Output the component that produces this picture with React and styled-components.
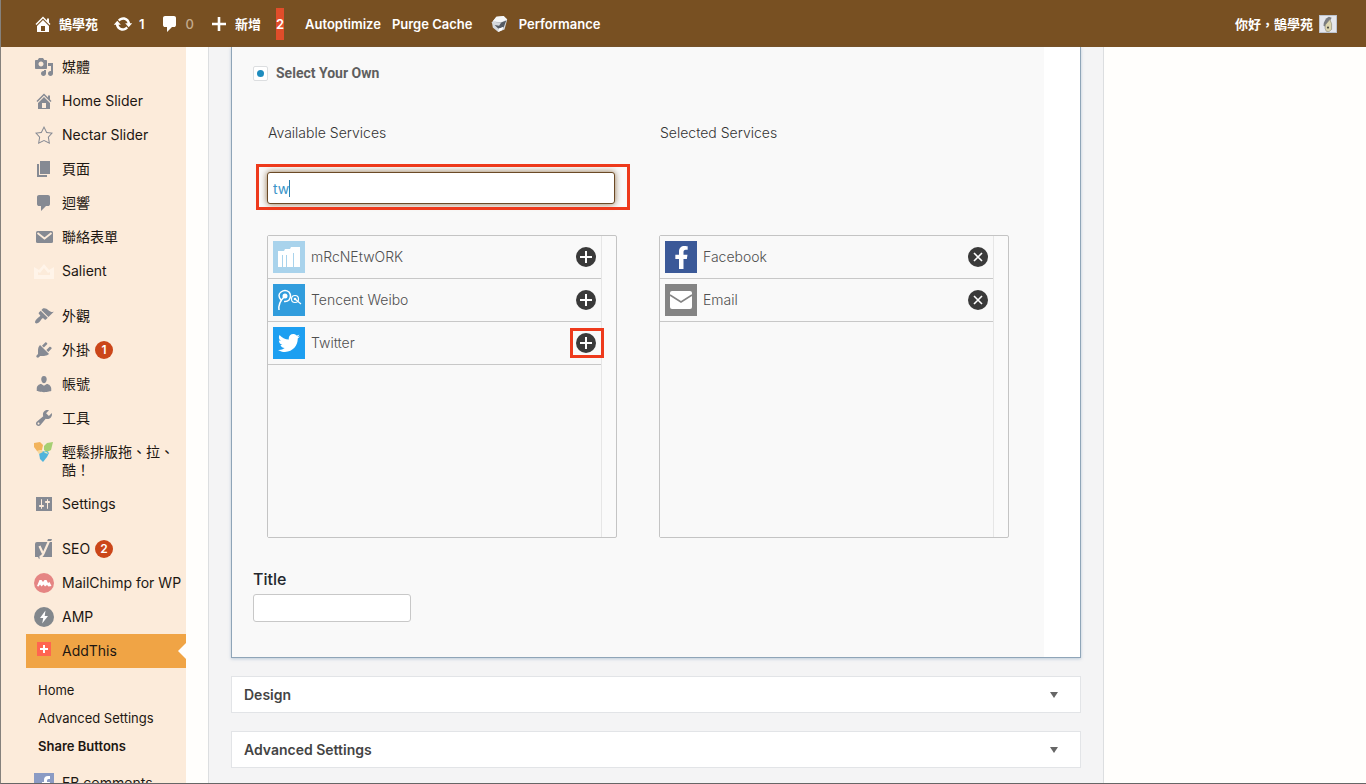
import React, { useState } from 'react';
import styled, { createGlobalStyle, css } from 'styled-components';
import { FaFacebookF, FaTwitter } from 'react-icons/fa';

const GlobalStyle = createGlobalStyle`
  *, *::before, *::after {
    box-sizing: border-box;
  }

  body {
    margin: 0;
    background: #fffefc;
    color: #444;
    font-family: Inter, 'Noto Sans CJK TC', sans-serif;
    font-size: 14px;
    line-height: 18px;
  }

  button, input {
    font: inherit;
  }

  a {
    color: inherit;
    text-decoration: none;
  }
`;

const Page = styled.div`
  display: flex;
  flex-direction: column;
  height: 100vh;
  overflow: hidden;
  border-left: 1px solid #85817c;
  border-bottom: 1px solid #666;
`;

/* Admin bar */

const AdminBar = styled.header`
  display: flex;
  flex: none;
  align-items: center;
  gap: 15px;
  height: 47px;
  padding: 0 29px 0 32px;
  background: #785022;
  color: #fff;
  font-size: 13px;
  font-weight: 600;
`;

const BarLink = styled.a`
  display: flex;
  align-items: center;
  gap: 6px;
  margin-left: ${(p) => p.$indent || 0}px;
  white-space: nowrap;
`;

const Muted = styled.span`
  color: #c4ab8d;
  font-weight: 500;
`;

const NoticeCount = styled.a`
  height: 32px;
  background: #e14d2a;
  line-height: 32px;
`;

const Account = styled(BarLink)`
  margin-left: auto;
`;

/* Sidebar */

const Main = styled.div`
  display: flex;
  flex: 1;
  min-height: 0;
`;

const Sidebar = styled.nav`
  flex: none;
  width: 185px;
  padding: 3px 0 0 25px;
  background: #fcebda;
  color: #1d1712;
`;

const Menu = styled.ul`
  margin: 0 0 11px;
  padding: 0;
  list-style: none;
`;

const MenuLink = styled.a`
  position: relative;
  display: flex;
  gap: 8px;
  padding: 8px 0 8px 8px;

  ${(p) =>
    p.$current &&
    css`
      background: #f0a445;

      &::after {
        content: '';
        position: absolute;
        top: 9px;
        right: 0;
        border: 8px solid transparent;
        border-right-color: #fffefc;
        border-left: 0;
      }
    `}
`;

const MenuIcon = styled.span`
  flex: none;
  width: 20px;
  height: 18px;
  color: #868a93;

  svg {
    display: block;
    margin: -1px 0;
  }
`;

const MenuText = styled.span`
  white-space: ${(p) => (p.$wrap ? 'normal' : 'nowrap')};
`;

const Badge = styled.span`
  display: inline-block;
  width: 18px;
  margin-left: 5px;
  border-radius: 9px;
  background: #cb4619;
  color: #fff;
  font-size: 12px;
  font-weight: 600;
  text-align: center;
  vertical-align: top;
`;

const SubMenu = styled.ul`
  margin: 0;
  padding: 8px 0 6px 12px;
  list-style: none;
  font-size: 13px;
  line-height: 28px;
`;

const SubLink = styled.a`
  display: block;
  font-weight: ${(p) => (p.$current ? 600 : 400)};
`;

/* Content */

const Content = styled.main`
  display: flex;
  flex: 1;
  min-width: 0;
  padding-left: 22px;
`;

const Panel = styled.div`
  display: flex;
  flex: 1;
  flex-direction: column;
  gap: 18px;
  max-width: 896px;
  padding: 0 22px;
  border: solid #dcdee0;
  border-width: 0 1px;
  background: #f4f4f5;
`;

const OpenCard = styled.section`
  padding-right: 36px;
  border: solid #8fa5b8;
  border-width: 0 1px 1px;
  background: #fff;
  box-shadow: 0 1px 3px rgba(90, 130, 170, 0.35);
`;

const CardBody = styled.div`
  padding: 14px 21px 35px;
  background: #f9f9f9;
`;

const RadioLabel = styled.label`
  display: flex;
  align-items: center;
  gap: 8px;
  height: 24px;
  color: #5f5f5f;
  font-family: Roboto, sans-serif;
  font-weight: 700;
`;

const Radio = styled.input`
  appearance: none;
  display: grid;
  place-items: center;
  width: 15px;
  height: 15px;
  margin: 0;
  border: 1px solid #dcdee0;
  border-radius: 2px;
  background: #fff;

  &:checked::before {
    content: '';
    width: 7px;
    height: 7px;
    border-radius: 50%;
    background: #1e8cbe;
  }
`;

const Columns = styled.div`
  display: grid;
  grid-template-columns: 1fr 1fr;
  gap: 42px;
  margin: 38px 14px 31px;
`;

const ColumnTitle = styled.h3`
  margin: 0 0 29px;
  padding-left: 1px;
  color: #333;
  font-size: 14px;
  font-weight: 300;
  line-height: 20px;
`;

const SearchRow = styled.div`
  position: relative;
  height: 32px;
  margin-bottom: 31px;
`;

const highlight = css`
  content: '';
  position: absolute;
  border: 3px solid #ee3a1c;
  pointer-events: none;
`;

const SearchBox = styled(SearchRow)`
  margin-right: 2px;

  &::after {
    ${highlight}
    inset: -8px -15px -6px -11px;
  }
`;

const SearchInput = styled.input`
  width: 100%;
  height: 32px;
  padding: 0 5px;
  border: 1px solid #6b4a26;
  border-radius: 3px;
  outline: none;
  background: #fff;
  box-shadow: 0 0 6px rgba(120, 80, 34, 0.8);
  color: #3a94c8;
  caret-color: transparent;
`;

const Caret = styled.span`
  position: absolute;
  top: 8px;
  left: 22px;
  width: 1px;
  height: 17px;
  background: #2a7fae;
`;

const ServiceBox = styled.div`
  height: 303px;
  padding-right: 14px;
  border: 1px solid #c4c4c4;
  border-radius: 2px;
  background: #fafafa;
`;

const ServiceList = styled.ul`
  height: 100%;
  margin: 0;
  padding: 0;
  border-right: 1px solid #e6e6e6;
  background: #f9f9f9;
  list-style: none;
`;

const ServiceRow = styled.li`
  display: flex;
  align-items: center;
  gap: 6px;
  height: 43px;
  padding: 0 5px;
  border-bottom: 1px solid #c8c8c8;
  color: #505050;
  font-weight: 300;
`;

const ServiceName = styled.span`
  flex: 1;
`;

const Tile = styled.span`
  display: grid;
  place-items: center;
  width: 32px;
  height: 32px;
  background: ${(p) => p.$color};
  color: #fff;
`;

const RoundButton = styled.button`
  position: relative;
  width: 20px;
  height: 20px;
  padding: 0;
  border: 0;
  border-radius: 50%;
  background: #3a3a3a;
  color: #fff;
  cursor: pointer;

  svg {
    display: block;
  }

  ${(p) =>
    p.$marked &&
    css`
      &::after {
        ${highlight}
        inset: -5px -8px -5px -6px;
      }
    `}
`;

const TitleField = styled.div`
  display: flex;
  flex-direction: column;
  align-items: flex-start;
  gap: 5px;
`;

const TitleLabel = styled.label`
  color: #23282d;
  font-size: 16px;
  font-weight: 500;
  line-height: 20px;
`;

const TitleInput = styled.input`
  width: 158px;
  height: 28px;
  padding: 0 6px;
  border: 1px solid #c8c8c8;
  border-radius: 3px;
  background: #fff;
`;

const ClosedCard = styled.button`
  display: flex;
  flex: none;
  align-items: center;
  justify-content: space-between;
  height: 37px;
  padding: 0 22px 0 12px;
  border: 1px solid #e2e4e7;
  background: #fff;
  color: #444;
  font-weight: 600;
  cursor: pointer;
`;

const Arrow = styled.span`
  border: 4px solid transparent;
  border-top: 6px solid #666;
  border-bottom: 0;
`;

/* Icons */

const paths = {
  media:
    'M13 11V4c0-.55-.45-1-1-1h-1.67L9 1H5L3.67 3H2c-.55 0-1 .45-1 1v7c0 .55.45 1 1 1h10c.55 0 1-.45 1-1zM7 4.5c1.38 0 2.5 1.12 2.5 2.5S8.38 9.5 7 9.5 4.5 8.38 4.5 7 5.62 4.5 7 4.5zM14 6h5v10.5c0 1.38-1.12 2.5-2.5 2.5S14 17.88 14 16.5s1.12-2.5 2.5-2.5c.17 0 .34.02.5.05V9h-3V6zm-4 8.05V13h2v3.5c0 1.38-1.12 2.5-2.5 2.5S7 17.88 7 16.5 8.12 14 9.5 14c.17 0 .34.02.5.05z',
  home: 'M16 8.5l1.53 1.53-1.06 1.06L10 4.6l-6.47 6.49-1.06-1.06L10 2.5l4 4v-2h2v4zm-6-2.46l6 5.99V18H4v-5.97zM12 17v-5H8v5h4z',
  star: 'M10 1L7 7l-6 .75 4.13 4.62L4 19l6-3 6 3-1.12-6.63L19 7.75 13 7zm0 2.24l2.34 4.69 4.65.58-3.18 3.56.87 5.15L10 14.88l-4.68 2.34.87-5.15-3.18-3.56 4.65-.58z',
  page: 'M6 15V2h10v13H6zm-1 1h8v2H3V5h2v11z',
  comment:
    'M5 2h9q.82 0 1.41.59T16 4v7q0 .82-.59 1.41T14 13h-2l-5 5v-5H5q-.82 0-1.41-.59T3 11V4q0-.82.59-1.41T5 2z',
  brush:
    'M14.48 11.06L7.41 3.99l1.5-1.5c.5-.56 2.3-.47 3.51.32 1.21.8 1.43 1.28 2.91 2.1 1.18.64 2.45 1.26 4.45.85zm-.71.71L6.7 4.7 4.93 6.47c-.39.39-.39 1.02 0 1.41l1.06 1.06c.39.39.39 1.03 0 1.42-.6.6-1.43 1.11-2.21 1.69-.35.26-.7.53-1.01.84C1.43 14.23.4 16.08 1.4 17.07c.99 1 2.84-.03 4.18-1.36.31-.31.58-.66.85-1.02.57-.78 1.08-1.61 1.69-2.21.39-.39 1.02-.39 1.41 0l1.06 1.06c.39.39 1.02.39 1.41 0z',
  plug: 'M13.11 4.36L9.87 7.6 8 5.73l3.24-3.24c.35-.34 1.05-.2 1.56.32.52.51.66 1.21.31 1.55zm-8 1.77l.91-1.12 9.01 9.01-1.19.84c-.71.71-2.63 1.16-3.82 1.16H6.14L4.9 17.26c-.59.59-1.54.59-2.12 0-.59-.58-.59-1.53 0-2.12l1.24-1.24v-3.88c0-1.13.4-3.19 1.09-3.89zm7.26 3.97l3.24-3.24c.34-.35 1.04-.21 1.55.31.52.51.66 1.21.31 1.55l-3.24 3.25z',
  user: 'M10 9.25c-2.27 0-2.73-3.44-2.73-3.44C7 4.02 7.82 2 9.97 2c2.16 0 2.98 2.02 2.71 3.81 0 0-.41 3.44-2.68 3.44zm0 2.57L12.72 10c2.39 0 4.52 2.33 4.52 4.53v2.49s-3.65 1.13-7.24 1.13c-3.65 0-7.24-1.13-7.24-1.13v-2.49c0-2.25 1.94-4.48 4.47-4.48z',
  wrench:
    'M16.68 9.77c-1.34 1.34-3.3 1.67-4.95.99l-5.41 6.52c-.99.99-2.59.99-3.58 0s-.99-2.59 0-3.57l6.52-5.42c-.68-1.65-.35-3.61.99-4.95 1.28-1.28 3.12-1.62 4.72-1.06l-2.89 2.89 2.82 2.82 2.86-2.87c.53 1.58.18 3.39-1.08 4.65zM3.81 16.21c.4.39 1.04.39 1.43 0 .4-.4.4-1.04 0-1.43-.39-.4-1.03-.4-1.43 0-.39.39-.39 1.03 0 1.43z',
  sliders:
    'M18 17V3H2v14h16zM8 11h1c.55 0 1 .45 1 1s-.45 1-1 1H8v1.5c0 .28-.22.5-.5.5s-.5-.22-.5-.5V13H6c-.55 0-1-.45-1-1s.45-1 1-1h1V5.5c0-.28.22-.5.5-.5s.5.22.5.5V11zm5-2h-1c-.55 0-1-.45-1-1s.45-1 1-1h1V5.5c0-.28.22-.5.5-.5s.5.22.5.5V7h1c.55 0 1 .45 1 1s-.45 1-1 1h-1v5.5c0 .28-.22.5-.5.5s-.5-.22-.5-.5V9z',
  update:
    'M10.2 3.28c3.53 0 6.43 2.61 6.92 6h2.08l-3.5 4-3.5-4h2.32c-.45-1.97-2.21-3.45-4.32-3.45-1.45 0-2.73.71-3.54 1.78L4.95 5.66C6.23 4.2 8.11 3.28 10.2 3.28zm-.4 13.44c-3.52 0-6.43-2.61-6.92-6H.8l3.5-4c1.17 1.33 2.33 2.67 3.5 4H5.48c.45 1.97 2.21 3.45 4.32 3.45 1.45 0 2.73-.71 3.54-1.78l1.71 1.95c-1.28 1.46-3.15 2.38-5.25 2.38z',
  plus: 'M17 8.7v2.6h-5.7V17H8.7v-5.7H3V8.7h5.7V3h2.6v5.7z',
};

const Svg = ({ size = 20, children }) => (
  <svg width={size} height={size} viewBox="0 0 20 20" fill="currentColor" aria-hidden="true">
    {children}
  </svg>
);

const Icon = ({ name }) => (
  <Svg>
    <path fillRule="evenodd" d={paths[name]} />
  </Svg>
);

const MailIcon = () => (
  <Svg>
    <rect x="2" y="4" width="17" height="12" rx="1.5" />
    <path d="M3.5 6l7 5.5 7-5.5" fill="none" stroke="#fcebda" strokeWidth="1.8" />
  </Svg>
);

const CrownIcon = () => (
  <Svg>
    <path d="M0 6l5 3 5-6 5 6 5-3v12H0z" fill="#fff4e9" />
    <path d="M4 14V11l2 1 4-5 4 5 2-1v3z" fill="#fcebda" />
  </Svg>
);

const ComposerIcon = () => (
  <Svg>
    <path d="M0 1l6-1 3 3-1 5-5 1-3-4z" fill="#f2b35b" />
    <path d="M10 4l3-3 6-1-2 8-4 2-3-2z" fill="#a5cf72" />
    <path d="M5 11l3-2h5l2 2-2 4-4 5-3-3z" fill="#4fb4dc" />
    <path d="M3 9l5-1 1 2-4 2z" fill="#f6d79c" />
    <path d="M9 9l4 1 1 2-3-1z" fill="#d8ecc0" />
  </Svg>
);

const YoastIcon = () => (
  <Svg>
    <path d="M3 3h15v15H7L5 20l-1-2H1V5q0-2 2-2z" />
    <path d="M5.500 7l3.200 7M15.500 1L9.500 14.500q-1.500 3.500-4 3.500" fill="none" stroke="#fcebda" strokeWidth="2.200" />
    <path d="M14 0h4l-.8 2h-4z" />
  </Svg>
);

const ChimpIcon = () => (
  <Svg>
    <circle cx="10" cy="10" r="10" fill="#e58583" />
    <path d="M3 13l2.500-6h2L9 9l1.500-2h2l1.500 3 1.500-1 2 4-3 .5-1.500-1.500-2 1.500-1.500-2-2 2-1.500-2-1.500 2z" fill="#fff" />
  </Svg>
);

const AmpIcon = () => (
  <Svg>
    <circle cx="10" cy="10" r="10" fill="#82878c" />
    <path d="M11.500 3.500L6 11h3.200l-1 5.500L14 9h-3.300z" fill="#fff" />
  </Svg>
);

const AddThisIcon = () => (
  <Svg>
    <path d="M3 1h14v14H3z" fill="#ff6550" />
    <path d="M9 4h2v3h3v2h-3v3H9V9H6V7h3z" fill="#fff" />
  </Svg>
);

const FbIcon = () => (
  <Svg>
    <path d="M0 0h20v20H0z" fill="#8b9bc4" />
    <path d="M10 20v-8H8V9h2V7q0-4 4-4h2v3h-1.500Q13 6 13 7.500V9h3l-.5 3H13v8z" fill="#fff" />
  </Svg>
);

const CubeIcon = () => (
  <Svg size={18}>
    <path d="M6 2l8-1 4 4-3 11-7 3-6-5L1 8z" fill="#d5d8dc" />
    <path d="M6 2l8-1 4 4-7 3-9-1z" fill="#f6f7f8" />
    <path d="M2 7l8 2 7-3-3 8-6 1-4-4 5 1 2-3z" fill="#555b63" />
    <path d="M9 15l5-2-2 4-4 2z" fill="#fff" />
  </Svg>
);

const Avatar = () => (
  <Svg size={18}>
    <path d="M0 0h20v20H0z" fill="#b9c0cc" />
    <path d="M1 1h18v18H1z" fill="#e6e7ec" />
    <path d="M5 12q0-7 6-10l3 1-3 6-4 4z" fill="#7b7d80" />
    <path d="M7 11l5-6q3 4 2 11-3 4-6 2-2-3-1-7z" fill="#ddd5ae" stroke="#8d8a7c" strokeWidth=".7" />
    <circle cx="10" cy="14" r="1.200" fill="#4b4840" />
  </Svg>
);

const MrcIcon = () => (
  <svg width="32" height="32" viewBox="0 0 32 32" aria-hidden="true">
    <path d="M5 10h6l1-2h5l1-2h9v20h-6V12h-1v14h-6V14h-1v12h-3V14h-1v12H5z" fill="#fff" />
  </svg>
);

const WeiboIcon = () => (
  <svg width="32" height="32" viewBox="0 0 32 32" fill="none" stroke="#fff" aria-hidden="true">
    <path d="M6 26Q5 19 11 13M8 16Q4 11 8 8q4-3 8 0 3 4 0 8-2 2-5 1.500" strokeWidth="1.500" />
    <circle cx="12" cy="12" r="2.500" fill="#fff" stroke="none" />
    <circle cx="22" cy="15" r="3.500" strokeWidth="1.200" />
    <path d="M22 15l6 5" strokeWidth="1.200" />
    <circle cx="22" cy="15" r="1.300" fill="#fff" stroke="none" />
  </svg>
);

const EnvelopeIcon = () => (
  <svg width="32" height="32" viewBox="0 0 32 32" aria-hidden="true">
    <rect x="5" y="7" width="22" height="18" rx="2" fill="#fff" />
    <path d="M5 11l11 7 11-7" fill="none" stroke="#848484" strokeWidth="1.500" />
  </svg>
);

const ActionIcon = ({ remove }) => (
  <Svg>
    <path
      d={remove ? 'M6 6l8 8M14 6l-8 8' : 'M10 4v12M4 10h12'}
      fill="none"
      stroke="#fff"
      strokeWidth={remove ? 1.6 : 2}
    />
  </Svg>
);

const menus = [
  [
    { text: '媒體', icon: <Icon name="media" /> },
    { text: 'Home Slider', icon: <Icon name="home" /> },
    { text: 'Nectar Slider', icon: <Icon name="star" /> },
    { text: '頁面', icon: <Icon name="page" /> },
    { text: '迴響', icon: <Icon name="comment" /> },
    { text: '聯絡表單', icon: <MailIcon /> },
    { text: 'Salient', icon: <CrownIcon /> },
  ],
  [
    { text: '外觀', icon: <Icon name="brush" /> },
    { text: '外掛', icon: <Icon name="plug" />, count: 1 },
    { text: '帳號', icon: <Icon name="user" /> },
    { text: '工具', icon: <Icon name="wrench" /> },
    { text: '輕鬆排版拖、拉、酷！', icon: <ComposerIcon />, wrap: true },
    { text: 'Settings', icon: <Icon name="sliders" /> },
  ],
  [
    { text: 'SEO', icon: <YoastIcon />, count: 2 },
    { text: 'MailChimp for WP', icon: <ChimpIcon /> },
    { text: 'AMP', icon: <AmpIcon /> },
    {
      text: 'AddThis',
      icon: <AddThisIcon />,
      current: true,
      children: ['Home', 'Advanced Settings', 'Share Buttons'],
    },
    { text: 'FB comments', icon: <FbIcon /> },
  ],
];

const available = [
  { name: 'mRcNEtwORK', color: '#a9d3ec', icon: <MrcIcon /> },
  { name: 'Tencent Weibo', color: '#319ddd', icon: <WeiboIcon /> },
  { name: 'Twitter', color: '#1d9ff1', icon: <FaTwitter size={22} />, marked: true },
];

const selected = [
  { name: 'Facebook', color: '#3b5998', icon: <FaFacebookF size={23} /> },
  { name: 'Email', color: '#848484', icon: <EnvelopeIcon /> },
];

function Services({ items, remove }) {
  return (
    <ServiceBox>
      <ServiceList>
        {items.map((item) => (
          <ServiceRow key={item.name}>
            <Tile $color={item.color}>{item.icon}</Tile>
            <ServiceName>{item.name}</ServiceName>
            <RoundButton
              type="button"
              $marked={item.marked}
              aria-label={`${remove ? 'Remove' : 'Add'} ${item.name}`}
            >
              <ActionIcon remove={remove} />
            </RoundButton>
          </ServiceRow>
        ))}
      </ServiceList>
    </ServiceBox>
  );
}

function SideMenu() {
  return (
    <Sidebar>
      {menus.map((group, i) => (
        <Menu key={i}>
          {group.map((item) => (
            <li key={item.text}>
              <MenuLink href="#" $current={item.current}>
                <MenuIcon>{item.icon}</MenuIcon>
                <MenuText $wrap={item.wrap}>
                  {item.text}
                  {item.count && <Badge>{item.count}</Badge>}
                </MenuText>
              </MenuLink>
              {item.children && (
                <SubMenu>
                  {item.children.map((text) => (
                    <li key={text}>
                      <SubLink href="#" $current={text === 'Share Buttons'}>
                        {text}
                      </SubLink>
                    </li>
                  ))}
                </SubMenu>
              )}
            </li>
          ))}
        </Menu>
      ))}
    </Sidebar>
  );
}

function App() {
  const [query, setQuery] = useState('tw');
  const [title, setTitle] = useState('');

  return (
    <Page>
      <GlobalStyle />
      <AdminBar>
        <BarLink href="#"><Icon name="home" />鵠學苑</BarLink>
        <BarLink href="#"><Icon name="update" />1</BarLink>
        <BarLink href="#"><Icon name="comment" /><Muted>0</Muted></BarLink>
        <BarLink href="#"><Icon name="plus" />新增</BarLink>
        <NoticeCount href="#">2</NoticeCount>
        <BarLink href="#" $indent={6}>Autoptimize</BarLink>
        <BarLink href="#" $indent={-4}>Purge Cache</BarLink>
        <BarLink href="#" $indent={4}><CubeIcon />&nbsp;Performance</BarLink>
        <Account href="#">你好，鵠學苑<Avatar /></Account>
      </AdminBar>
      <Main>
        <SideMenu />
        <Content>
          <Panel>
            <OpenCard>
              <CardBody>
                <RadioLabel>
                  <Radio type="radio" name="services" defaultChecked />
                  Select Your Own
                </RadioLabel>
                <Columns>
                  <div>
                    <ColumnTitle>Available Services</ColumnTitle>
                    <SearchBox>
                      <SearchInput
                        type="text"
                        aria-label="Search services"
                        value={query}
                        onChange={(e) => setQuery(e.target.value)}
                      />
                      {query === 'tw' && <Caret />}
                    </SearchBox>
                    <Services items={available} />
                  </div>
                  <div>
                    <ColumnTitle>Selected Services</ColumnTitle>
                    <SearchRow />
                    <Services items={selected} remove />
                  </div>
                </Columns>
                <TitleField>
                  <TitleLabel htmlFor="title">Title</TitleLabel>
                  <TitleInput
                    id="title"
                    type="text"
                    value={title}
                    onChange={(e) => setTitle(e.target.value)}
                  />
                </TitleField>
              </CardBody>
            </OpenCard>
            <ClosedCard type="button">Design<Arrow /></ClosedCard>
            <ClosedCard type="button">Advanced Settings<Arrow /></ClosedCard>
          </Panel>
        </Content>
      </Main>
    </Page>
  );
}

export default App;
